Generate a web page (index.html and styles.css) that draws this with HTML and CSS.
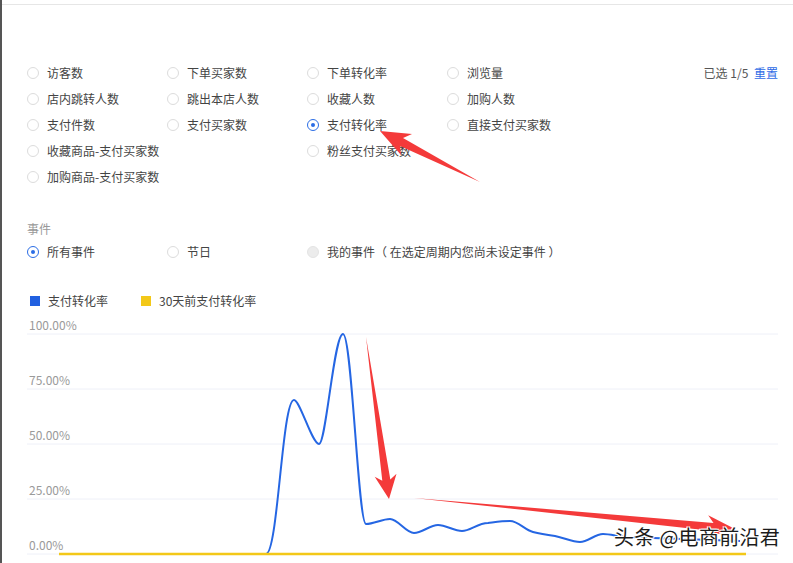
FILE: index.html
```html
<!DOCTYPE html>
<html lang="zh-CN">
<head>
    <meta charset="UTF-8">
    <meta name="viewport" content="width=device-width, initial-scale=1.0">
    <title>支付转化率</title>
    <link rel="stylesheet" href="styles.css">
</head>
<body>
    <div class="page">
        <div class="topline"></div>

        <div class="metrics">
            <div class="metric-grid">
                <label class="radio"><span class="dot"></span>访客数</label>
                <label class="radio"><span class="dot"></span>下单买家数</label>
                <label class="radio"><span class="dot"></span>下单转化率</label>
                <label class="radio"><span class="dot"></span>浏览量</label>

                <label class="radio"><span class="dot"></span>店内跳转人数</label>
                <label class="radio"><span class="dot"></span>跳出本店人数</label>
                <label class="radio"><span class="dot"></span>收藏人数</label>
                <label class="radio"><span class="dot"></span>加购人数</label>

                <label class="radio"><span class="dot"></span>支付件数</label>
                <label class="radio"><span class="dot"></span>支付买家数</label>
                <label class="radio"><span class="dot checked"></span>支付转化率</label>
                <label class="radio"><span class="dot"></span>直接支付买家数</label>

                <label class="radio"><span class="dot"></span>收藏商品-支付买家数</label>
                <span></span>
                <label class="radio"><span class="dot"></span>粉丝支付买家数</label>
                <span></span>

                <label class="radio"><span class="dot"></span>加购商品-支付买家数</label>
            </div>
            <div class="selected">已选 1/5 <a class="reset">重置</a></div>
        </div>

        <div class="section-title">事件</div>
        <div class="event-row">
            <label class="radio"><span class="dot checked"></span>所有事件</label>
            <label class="radio"><span class="dot"></span>节日</label>
            <label class="radio wide"><span class="dot disabled"></span>我的事件（ 在选定周期内您尚未设定事件 ）</label>
        </div>

        <div class="legend">
            <span class="legend-item"><i class="swatch blue"></i>支付转化率</span>
            <span class="legend-item"><i class="swatch yellow"></i>30天前支付转化率</span>
        </div>

        <svg class="chart" width="791" height="253" viewBox="2 310 791 253">
            <g class="grid">
                <line x1="27" y1="333" x2="778" y2="333"/>
                <line x1="27" y1="388" x2="778" y2="388"/>
                <line x1="27" y1="443" x2="778" y2="443"/>
                <line x1="27" y1="498" x2="778" y2="498"/>
                <line x1="27" y1="553" x2="778" y2="553"/>
            </g>
            <g class="axis">
                <text x="29" y="329">100.00%</text>
                <text x="29" y="384">75.00%</text>
                <text x="29" y="439">50.00%</text>
                <text x="29" y="494">25.00%</text>
                <text x="29" y="549">0.00%</text>
            </g>
            <path class="line-blue" d="M59,553 L266,553
                C278,553 282,399 294,399
                C300,399 312,443 319,443
                C326,443 334,333 343,333
                C352,333 358,523 366,523
                C374,523 382,518 390,518
                C398,518 406,532 414,532
                C422,532 430,524 438,524
                C446,524 454,530 462,530
                C470,530 478,522 488,522
                C496,521 502,520 510,520
                C518,520 525,529 533,531
                C541,533 548,534 555,535
                C565,537 572,541 580,541
                C588,541 595,533 603,533
                C611,533 619,536 627,536
                C637,536 645,537 653,537
                L740,540"/>
            <line class="line-yellow" x1="59" y1="553" x2="746" y2="553"/>
        </svg>

        <!-- 标注箭头 -->
        <svg class="marks" width="793" height="563" viewBox="0 0 793 563">
            <polygon points="380,131 412,134 403,138 480,182 400,146 401,155"/>
            <polygon points="389,499 396.5,473.7 390.3,479.6 366,337 382.3,480.8 374.7,476.7"/>
            <polygon points="735,529 708.2,515.3 713.5,522.9 414,498 712.7,530.9 706,537.3"/>
        </svg>

        <div class="watermark">头条 @电商前沿君</div>
    </div>
</body>
</html>
```

FILE: styles.css
```css
body {
    margin: 0;
    font-family: "Noto Sans CJK SC", "Noto Sans", sans-serif;
    font-size: 12px;
    color: #444;
    background-color: #fff;
}
.page {
    position: relative;
    height: 563px;
    overflow: hidden;
    border-left: 2px solid #555;
}
.topline {
    height: 4px;
    border-bottom: 1px solid #e6e6e6;
}
.metrics {
    display: flex;
    justify-content: space-between;
    margin-top: 55px;
    padding: 0 15px 0 25px;
}
.metric-grid {
    display: grid;
    grid-template-columns: repeat(4, 140px);
    grid-auto-rows: 26px;
}
.radio {
    display: flex;
    align-items: center;
    gap: 8px;
    white-space: nowrap;
    line-height: 26px;
}
.dot {
    position: relative;
    box-sizing: border-box;
    width: 12px;
    height: 12px;
    border: 1px solid #dcdcdc;
    border-radius: 50%;
    flex-shrink: 0;
}
.dot.checked {
    border-color: #2b6de5;
}
.dot.checked::after {
    content: "";
    position: absolute;
    left: 3px;
    top: 3px;
    width: 4px;
    height: 4px;
    border-radius: 50%;
    background-color: #2b6de5;
}
.dot.disabled {
    background-color: #ececec;
    border-color: #e4e4e4;
}
.selected {
    line-height: 26px;
    color: #555;
}
.reset {
    color: #2e6be6;
    margin-left: 3px;
}
.section-title {
    margin-top: 29px;
    padding-left: 25px;
    line-height: 20px;
    color: #999;
}
.event-row {
    display: grid;
    grid-template-columns: 140px 140px auto;
    padding-left: 25px;
    height: 26px;
}
.legend {
    display: flex;
    margin-top: 26px;
    padding-left: 28px;
    line-height: 20px;
}
.legend-item {
    display: flex;
    align-items: center;
    gap: 8px;
    margin-right: 33px;
}
.swatch {
    display: inline-block;
    width: 10px;
    height: 10px;
}
.swatch.blue {
    background-color: #2160e0;
}
.swatch.yellow {
    background-color: #f3c818;
}
.chart {
    display: block;
}
.grid line {
    stroke: #eef0f8;
    stroke-width: 1;
}
.axis text {
    font-family: "Noto Sans CJK SC", "Noto Sans", sans-serif;
    font-size: 12px;
    fill: #9a9a9a;
}
.line-blue {
    fill: none;
    stroke: #2566e3;
    stroke-width: 2;
}
.line-yellow {
    stroke: #f3c818;
    stroke-width: 2.5;
}
.marks {
    position: absolute;
    left: -2px;
    top: 0;
    pointer-events: none;
}
.marks polygon {
    fill: #f43a3a;
}
.watermark {
    position: absolute;
    left: 612px;
    top: 524px;
    font-size: 20px;
    line-height: 26px;
    letter-spacing: 0.3px;
    color: #1c1c1c;
    text-shadow: 1px 1px 0 #fff, -1px -1px 0 #fff, 1px -1px 0 #fff, -1px 1px 0 #fff;
}
```
